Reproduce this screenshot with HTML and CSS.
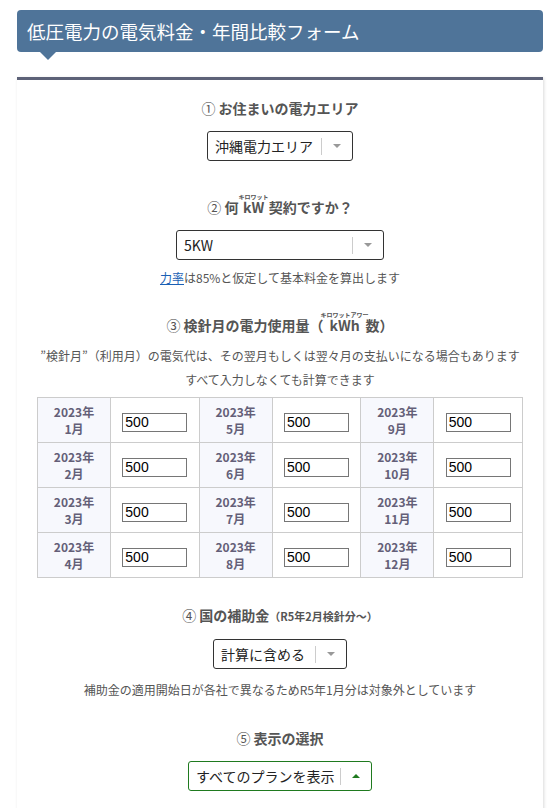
FILE: index.html
```html
<!DOCTYPE html>
<html lang="ja">
<head>
  <meta charset="UTF-8">
  <meta name="viewport" content="width=device-width, initial-scale=1.0">
  <title>低圧電力の電気料金・年間比較フォーム</title>
  <link rel="stylesheet" href="styles.css">
</head>
<body>
  <div class="wrap">
    <h1 class="title">低圧電力の電気料金・年間比較フォーム</h1>

    <form class="card" id="compareForm">
      <div class="section">
        <h2 class="heading"><span class="num">①</span> お住まいの電力エリア</h2>
        <div class="select select-area">
          <span class="select-text">沖縄電力エリア</span>
          <span class="select-bar"></span>
          <span class="select-arrow"></span>
        </div>
      </div>

      <div class="section section-kw">
        <h2 class="heading"><span class="num">②</span> 何 <ruby>kW<rt>キロワット</rt></ruby> 契約ですか？</h2>
        <div class="select select-kw">
          <span class="select-text">5KW</span>
          <span class="select-bar"></span>
          <span class="select-arrow"></span>
        </div>
        <p class="note"><a href="#" class="link">力率</a>は85%と仮定して基本料金を算出します</p>
      </div>

      <div class="section section-usage">
        <h2 class="heading"><span class="num">③</span> 検針月の電力使用量（<ruby>kWh<rt>キロワットアワー</rt></ruby>数）</h2>
        <p class="note note-lines">”検針月”（利用月）の電気代は、その翌月もしくは翌々月の支払いになる場合もあります<br>すべて入力しなくても計算できます</p>
        <table class="usage">
          <tr>
            <th>2023年<br>1月</th><td><input type="text" value="500"></td>
            <th>2023年<br>5月</th><td><input type="text" value="500"></td>
            <th>2023年<br>9月</th><td><input type="text" value="500"></td>
          </tr>
          <tr>
            <th>2023年<br>2月</th><td><input type="text" value="500"></td>
            <th>2023年<br>6月</th><td><input type="text" value="500"></td>
            <th>2023年<br>10月</th><td><input type="text" value="500"></td>
          </tr>
          <tr>
            <th>2023年<br>3月</th><td><input type="text" value="500"></td>
            <th>2023年<br>7月</th><td><input type="text" value="500"></td>
            <th>2023年<br>11月</th><td><input type="text" value="500"></td>
          </tr>
          <tr>
            <th>2023年<br>4月</th><td><input type="text" value="500"></td>
            <th>2023年<br>8月</th><td><input type="text" value="500"></td>
            <th>2023年<br>12月</th><td><input type="text" value="500"></td>
          </tr>
        </table>
      </div>

      <div class="section section-tight">
        <h2 class="heading"><span class="num">④</span> 国の補助金<small>（R5年2月検針分〜）</small></h2>
        <div class="select select-subsidy">
          <span class="select-text">計算に含める</span>
          <span class="select-bar"></span>
          <span class="select-arrow"></span>
        </div>
        <p class="note note-wide">補助金の適用開始日が各社で異なるためR5年1月分は対象外としています</p>
      </div>

      <div class="section section-view">
        <h2 class="heading"><span class="num">⑤</span> 表示の選択</h2>
        <div class="select select-view is-open">
          <span class="select-text">すべてのプランを表示</span>
          <span class="select-bar"></span>
          <span class="select-arrow"></span>
        </div>
      </div>
    </form>
  </div>
</body>
</html>
```

FILE: styles.css
```css
body {
  margin: 0;
  background: #fff;
  font-family: "Noto Sans CJK JP", "Noto Sans", sans-serif;
  color: #333;
}
.wrap {
  width: 526px;
  margin: 10px 0 0 17px;
}
.title {
  position: relative;
  margin: 0;
  height: 42px;
  padding-left: 10px;
  background: #4f7499;
  border-radius: 4px;
  color: #fff;
  font-size: 18.5px;
  font-weight: normal;
  line-height: 42px;
}
.title::after {
  content: "";
  position: absolute;
  left: 23px;
  bottom: -8px;
  border-left: 8px solid transparent;
  border-right: 8px solid transparent;
  border-top: 8px solid #4f7499;
}
.card {
  margin-top: 25px;
  padding: 18px 19px 40px;
  border-top: 3px solid #5d6278;
  background: #fff;
  box-shadow: 1px 1px 3px rgba(0, 0, 0, 0.15);
}
.section {
  display: flex;
  flex-direction: column;
  align-items: center;
  margin-top: 30px;
}
.section:first-child {
  margin-top: 0;
}
.section-kw {
  margin-top: 32px;
}
.section-usage {
  margin-top: 24px;
}
.section-tight {
  margin-top: 27px;
}
.section-view {
  margin-top: 29px;
}
.heading {
  margin: 0 0 13px;
  font-size: 14px;
  font-weight: bold;
  line-height: 20px;
  color: #555;
}
.heading .num {
  font-weight: normal;
}
.heading small {
  font-size: 11px;
}
ruby rt {
  font-size: 6px;
  font-weight: bold;
  line-height: 1;
}
.select {
  display: flex;
  align-items: center;
  box-sizing: border-box;
  height: 30px;
  padding-left: 7px;
  border: 1px solid #333;
  border-radius: 3px;
  background: #fff;
  font-size: 14px;
  color: #222;
}
.select-text {
  flex: 1;
}
.select-bar {
  width: 1px;
  height: 17px;
  background: #ccc;
}
.select-arrow {
  width: 30px;
  display: flex;
  justify-content: center;
}
.select-arrow::before {
  content: "";
  border-left: 4px solid transparent;
  border-right: 4px solid transparent;
  border-top: 4px solid #999;
}
.is-open {
  border-color: #1f7a1f;
}
.is-open .select-arrow::before {
  border-top: none;
  border-bottom: 4px solid #1f7a1f;
}
.select-area { width: 146px; }
.select-kw { width: 208px; }
.select-subsidy { width: 134px; }
.select-view { width: 184px; }
.note {
  margin: 9px 0 0;
  font-size: 12px;
  line-height: 18px;
  color: #555;
  text-align: center;
}
.note-wide {
  margin-top: 12px;
}
.note-lines {
  margin: -4px 0 0;
  line-height: 24px;
}
.link {
  color: #1a5fb4;
}
.usage {
  width: 486px;
  margin-top: 5px;
  border-collapse: collapse;
}
.usage th,
.usage td {
  height: 44px;
  border: 1px solid #ccc;
  padding: 0;
}
.usage th {
  width: 72px;
  background: #f7f8fd;
  font-size: 12px;
  line-height: 17px;
  color: #645f78;
}
.usage td {
  text-align: center;
}
.usage input {
  box-sizing: border-box;
  width: 65px;
  height: 19px;
  padding: 0 2px;
  border: 1px solid #767676;
  font-family: "Liberation Sans", Arial, sans-serif;
  font-size: 14px;
  color: #000;
}
```
